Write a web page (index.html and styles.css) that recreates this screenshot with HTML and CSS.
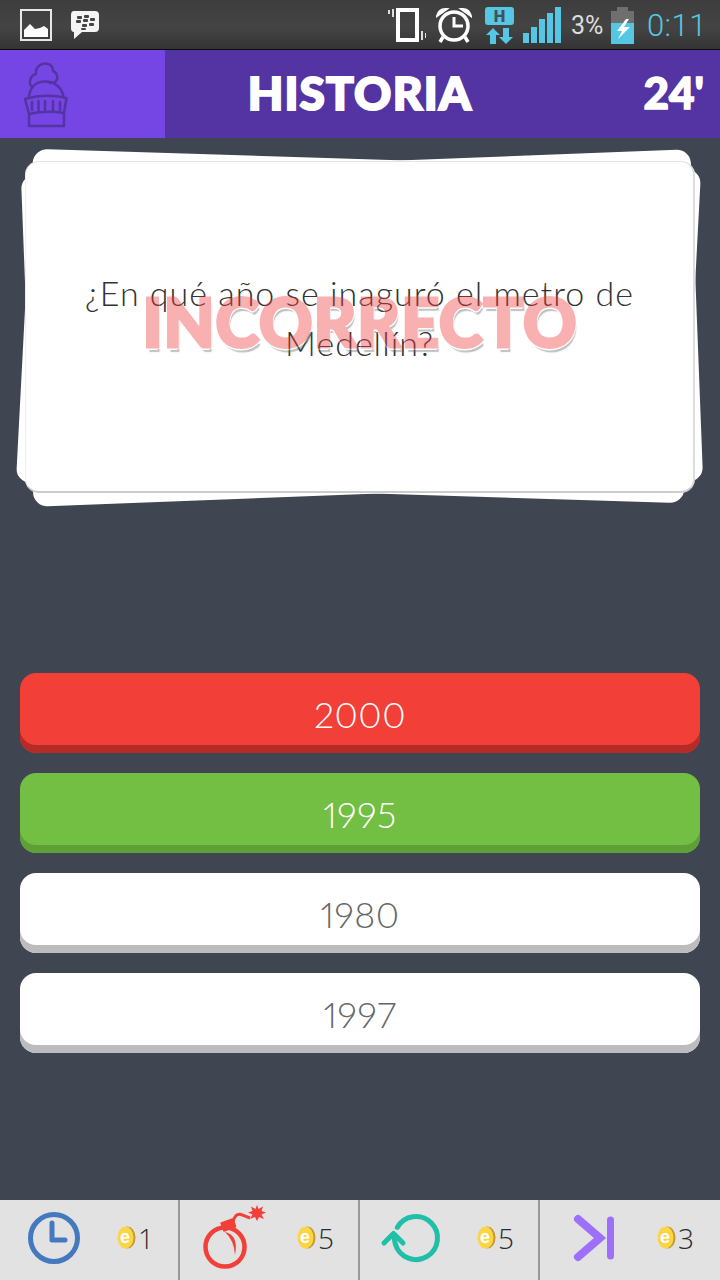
FILE: index.html
```html
<!DOCTYPE html>
<html lang="es">
<head>
<meta charset="utf-8">
<title>Historia</title>
<link rel="stylesheet" href="styles.css">
</head>
<body>
<div class="status">
  <svg class="s-img" width="32" height="32" viewBox="0 0 32 32"><rect x="1" y="1" width="30" height="30" fill="none" stroke="#e8e8e8" stroke-width="2"/><path d="M4 28V21L10 15L15 20L20 19L24 17L28 20V28Z" fill="#fff"/></svg>
  <svg class="s-bbm" width="30" height="30" viewBox="0 0 30 30"><path d="M4 1H25Q29 1 29 5V18Q29 22 25 22H12L4 29V22Q1 22 1 18V5Q1 1 4 1Z" fill="#f4f4f4"/><g fill="#444"><rect x="7" y="6" width="5" height="3" rx="1"/><rect x="14" y="5" width="5" height="3" rx="1"/><rect x="20" y="8" width="5" height="3" rx="1"/><rect x="6" y="10" width="5" height="3" rx="1"/><rect x="13" y="9" width="5" height="3" rx="1"/><rect x="19" y="13" width="5" height="3" rx="1"/><rect x="12" y="14" width="5" height="3" rx="1"/><rect x="11" y="18" width="5" height="2" rx="1"/></g></svg>
  <span class="s-fill"></span>
  <svg class="s-vib" width="38" height="36" viewBox="0 0 38 36"><rect x="10" y="3" width="19" height="30" fill="none" stroke="#fff" stroke-width="4"/><path d="M5 2V10M1 3V7M34 24V33M38 26V31" stroke="#ddd" stroke-width="2" fill="none"/></svg>
  <svg class="s-alarm" width="36" height="36" viewBox="0 0 36 36"><circle cx="18" cy="19" r="14" fill="none" stroke="#fff" stroke-width="3.5"/><path d="M18 10V19H27" fill="none" stroke="#fff" stroke-width="3"/><path d="M1 9Q3 1 11 2ZM35 9Q33 1 25 2Z" fill="#fff" stroke="#fff" stroke-width="2"/><path d="M7 30L4 35M29 30L32 35" stroke="#fff" stroke-width="3.5"/></svg>
  <svg class="s-net" width="30" height="37" viewBox="0 0 30 37"><rect y="0" width="29" height="18" rx="3" fill="#55c6e3"/><text x="14.500" y="14.500" class="net-h">H</text><path d="M8 21L15 28H11V37H5V28H1ZM21 37L14 30H18V21H24V30H28Z" fill="#55c6e3"/></svg>
  <svg class="s-sig" width="38" height="36" viewBox="0 0 38 36"><g fill="#55c6e3"><rect y="26" width="6" height="10"/><rect x="8" y="20" width="6" height="16"/><rect x="16" y="12" width="6" height="24"/><rect x="24" y="6" width="6" height="30"/><rect x="32" y="0" width="6" height="36"/></g></svg>
  <span class="s-pct">3%</span>
  <svg class="s-bat" width="23" height="37" viewBox="0 0 23 37"><path d="M6 0H17V4H23V37H0V4H6Z" fill="#6f6f6f"/><rect y="16" width="23" height="21" fill="#55c6e3"/><path d="M15 12L6 24H11L7 32L19 20H13L18 12Z" fill="#fff"/></svg>
  <span class="s-time">0:11</span>
</div>
<header class="top">
  <div class="badge">
    <svg width="46" height="68" viewBox="0 0 46 68" class="helmet"><g fill="none" stroke="#5433a3" stroke-width="2.500" stroke-linejoin="round" stroke-linecap="round"><path d="M10 27C5 26 6 16 13 14C12 6 20 2 25 4C29 5 30 8 30 11C35 13 36 20 31 22.500L27 23"/><path d="M6 37C7 26 14 21.500 22 21.500C31 21.500 39 27 40.500 37"/><path d="M2 39Q22 33 43.500 38L41 53Q22 50 6 54Z"/><path d="M9 42V50M15.500 41V50M22 41V50M30 41V50M37 42V50"/><path d="M6 54V66H41V52"/></g></svg>
  </div>
  <h1 class="title">HISTORIA</h1>
  <div class="timer">24'</div>
</header>
<main class="game">
  <section class="stack">
    <div class="sheet sheet-right"></div>
    <div class="sheet sheet-left"></div>
    <div class="card"><p class="question">¿En qué año se inaguró el metro de Medellín?</p></div>
    <div class="verdict">INCORRECTO</div>
  </section>
  <section class="answers">
    <div class="answer wrong">2000</div>
    <div class="answer right">1995</div>
    <div class="answer">1980</div>
    <div class="answer">1997</div>
  </section>
</main>
<footer class="powers">
  <div class="power">
    <svg class="p-icon" width="70" height="70" viewBox="0 0 70 70"><circle cx="34" cy="33" r="23.500" fill="none" stroke="#4478bf" stroke-width="5"/><path d="M32 18V35H45" fill="none" stroke="#4478bf" stroke-width="5" stroke-linecap="round" stroke-linejoin="round"/></svg>
    <svg class="coin" width="19" height="23" viewBox="0 0 19 23"><ellipse cx="10.500" cy="11.500" rx="8" ry="11" fill="#c49a30"/><ellipse cx="8.500" cy="11.500" rx="8" ry="11" fill="#fbd545"/><text x="8" y="17" class="coin-e">e</text></svg>
    <span class="cost">1</span>
  </div>
  <div class="power">
    <svg class="p-icon" width="70" height="70" viewBox="0 0 70 70"><circle cx="25" cy="42" r="19.500" fill="none" stroke="#f23f38" stroke-width="4.500"/><path d="M25 27Q39 30 35 50Q34 35 25 27Z" fill="#f23f38"/><rect x="21" y="15" width="14" height="10" rx="1" transform="rotate(-20 28 19)" fill="#f23f38"/><path d="M33 17Q35 8 41 9.500Q45 11 50 13" fill="none" stroke="#f23f38" stroke-width="3"/><path d="M57 0L58.500 4L63 1.500L61.500 6L66 7.500L61.500 9.500L64 14L59 12L57 16L55 12L50 14L52.500 9.500L48 7.500L52.500 6L51 1.500L55.500 4Z" fill="#f23f38"/></svg>
    <svg class="coin" width="19" height="23" viewBox="0 0 19 23"><ellipse cx="10.500" cy="11.500" rx="8" ry="11" fill="#c49a30"/><ellipse cx="8.500" cy="11.500" rx="8" ry="11" fill="#fbd545"/><text x="8" y="17" class="coin-e">e</text></svg>
    <span class="cost">5</span>
  </div>
  <div class="power">
    <svg class="p-icon" width="70" height="70" viewBox="0 0 70 70"><path d="M17.300 22.400A21.500 21.500 0 1 1 15.400 39.300L13.500 30" fill="none" stroke="#1fbfa8" stroke-width="5" stroke-linecap="round"/><path d="M4 38L13.500 28.500L23 38" fill="none" stroke="#1fbfa8" stroke-width="5" stroke-linecap="round" stroke-linejoin="round"/></svg>
    <svg class="coin" width="19" height="23" viewBox="0 0 19 23"><ellipse cx="10.500" cy="11.500" rx="8" ry="11" fill="#c49a30"/><ellipse cx="8.500" cy="11.500" rx="8" ry="11" fill="#fbd545"/><text x="8" y="17" class="coin-e">e</text></svg>
    <span class="cost">5</span>
  </div>
  <div class="power">
    <svg class="p-icon" width="70" height="70" viewBox="0 0 70 70"><path d="M18 14L40 33L18 52" fill="none" stroke="#9d6ffb" stroke-width="8" stroke-linecap="round" stroke-linejoin="miter"/><path d="M50.500 15V51" stroke="#9d6ffb" stroke-width="7" stroke-linecap="round"/></svg>
    <svg class="coin" width="19" height="23" viewBox="0 0 19 23"><ellipse cx="10.500" cy="11.500" rx="8" ry="11" fill="#c49a30"/><ellipse cx="8.500" cy="11.500" rx="8" ry="11" fill="#fbd545"/><text x="8" y="17" class="coin-e">e</text></svg>
    <span class="cost">3</span>
  </div>
</footer>
</body>
</html>
```
FILE: styles.css
```css
* { box-sizing: border-box; }
html, body { margin: 0; padding: 0; }
body {
  width: 720px;
  height: 1280px;
  display: flex;
  flex-direction: column;
  background: #3f4651;
  font-family: "Lato", "Liberation Sans", sans-serif;
  overflow: hidden;
}
.status {
  height: 50px;
  flex: none;
  display: flex;
  align-items: center;
  padding: 1px 13px 0 20px;
  background: linear-gradient(#3d3d3d, #444 55%, #343434);
  border-bottom: 1px solid #0c0c0c;
}
.status svg { display: block; flex: none; }
.s-bbm { margin: 0 0 0 18px; }
.s-fill { flex: 1; }
.s-vib { margin-right: 10px; }
.s-alarm { margin-right: 13px; }
.s-net { margin-right: 8px; }
.s-sig { margin-right: 10px; }
.s-pct {
  font: 400 25px "Roboto", sans-serif;
  color: #ddd;
  width: 32px;
  margin-right: 8px;
  white-space: nowrap;
}
.s-bat { margin-right: 13px; }
.s-time {
  font: 300 31px "Roboto", sans-serif;
  color: #55c6e3;
  letter-spacing: .5px;
  white-space: nowrap;
}
.net-h { font: 700 15px "DejaVu Sans", sans-serif; fill: #44505a; text-anchor: middle; }

.top {
  height: 88px;
  flex: none;
  display: grid;
  grid-template-columns: 165px 1fr 165px;
  align-items: center;
  background: #5433a3;
  color: #fff;
}
.badge {
  height: 88px;
  background: #7546e4;
  display: flex;
  align-items: center;
  padding-left: 23px;
}
.helmet { display: block; }
.title {
  margin: 0;
  padding-bottom: 4px;
  text-align: center;
  font: 900 46px "Lato", sans-serif;
  -webkit-text-stroke: 2px #fff;
  letter-spacing: 1.200px;
}
.timer {
  text-align: right;
  padding: 0 16px 4px 0;
  font: 900 44px "Lato", sans-serif;
  -webkit-text-stroke: 1.500px #fff;
}

.game { flex: 1; display: flex; flex-direction: column; }
.stack {
  position: relative;
  height: 332px;
  margin: 23px 25px 0;
}
.sheet {
  position: absolute;
  background: #fff;
  border-radius: 14px;
}
.sheet-right {
  inset: -1px 1px;
  transform: translate(-1.500px, -1px) rotate(1.800deg) skewX(-1.200deg);
}
.sheet-left {
  inset: 0;
  transform: translate(2px, 1px) rotate(-2.200deg);
}
.card {
  position: relative;
  height: 332px;
  background: #fff;
  border-radius: 14px;
  border-top: 1px solid #e4e4e4;
  border-right: 2px solid #ddd;
  border-bottom: 2px solid #ccc;
  border-left: 1px solid #eee;
  display: flex;
  align-items: center;
  justify-content: center;
  padding: 0 40px 18px;
}
.question {
  margin: 0;
  text-align: center;
  font: 300 34px/50px "Lato", sans-serif;
  letter-spacing: 1px;
  color: #333;
}
.verdict {
  position: absolute;
  left: 0;
  right: 0;
  top: 121px;
  text-align: center;
  font: 900 66px/80px "Lato", sans-serif;
  letter-spacing: 1px;
  color: #f03c3c;
  -webkit-text-stroke: 3px #f03c3c;
  text-shadow: 2px 2px 0 #fff, -2px 2px 0 #fff, 0 3px 0 #fff, 2px 5px 1px #666;
  opacity: .4;
}
.answers {
  display: flex;
  flex-direction: column;
  gap: 20px;
  margin: 180px 20px 0;
}
.answer {
  height: 80px;
  padding-top: 1px;
  border-radius: 16px;
  background: #fff;
  box-shadow: inset 0 -8px 0 #bcbcbc;
  display: flex;
  align-items: center;
  justify-content: center;
  font: 300 36px "Lato", sans-serif;
  font-variant-numeric: proportional-nums;
  letter-spacing: .5px;
  color: #666;
}
.wrong { background: #f23f38; box-shadow: inset 0 -8px 0 #b52b25; color: #fff; }
.right { background: #72bf44; box-shadow: inset 0 -8px 0 #5ea035; color: #fff; }

.powers {
  height: 80px;
  flex: none;
  display: grid;
  grid-template-columns: repeat(4, 180px);
  background: #e2e2e2;
}
.power {
  display: flex;
  align-items: center;
  padding-left: 20px;
  border-right: 2px solid #999;
}
.power:last-child { border-right: 0; }
.p-icon { display: block; flex: none; overflow: visible; }
.coin { display: block; flex: none; margin: -6px 2px 0 27px; }
.coin-e { font: 700 18px "Liberation Sans", sans-serif; fill: #fff; text-anchor: middle; }
.cost {
  font: 300 28px "Open Sans", sans-serif;
  color: #2c2c2c;
  margin-top: -5px;
}
```
